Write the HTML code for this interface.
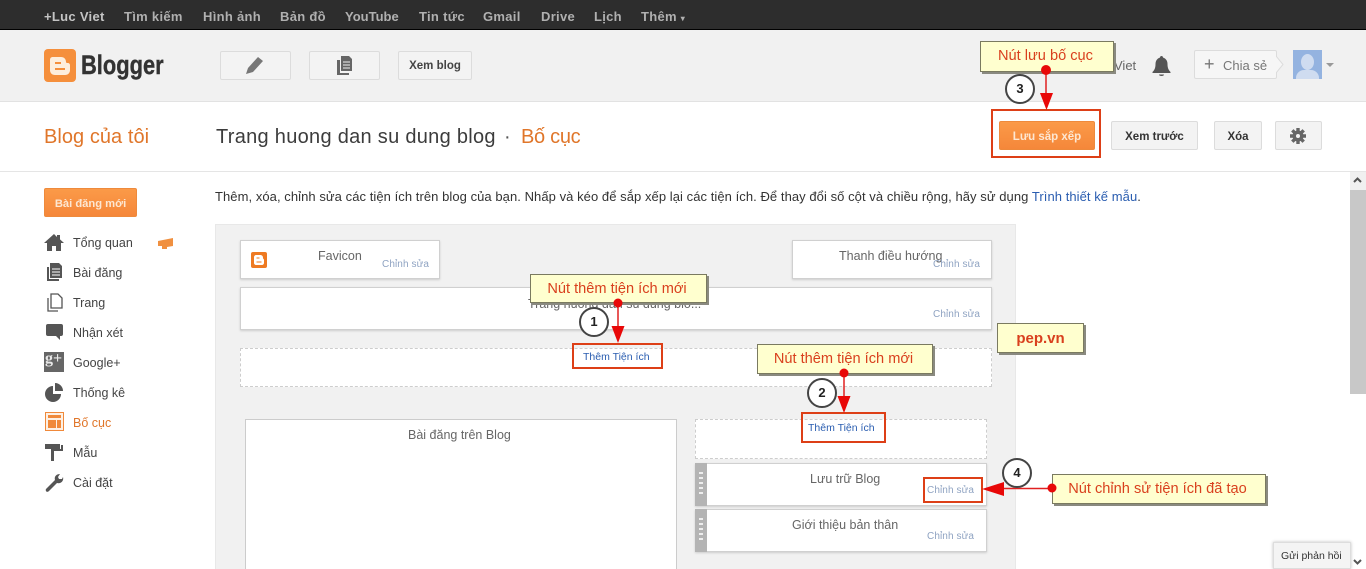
<!DOCTYPE html>
<html><head><meta charset="utf-8"><style>
html,body{margin:0;padding:0;width:1366px;height:569px;overflow:hidden;background:#fff;font-family:"Liberation Sans",sans-serif;color:#444}
body{position:relative}
div,a,span.a,svg{position:absolute}
.t{white-space:nowrap}
.nav{top:9px;font-size:13px;line-height:16px;font-weight:bold;color:#b0b0b0;white-space:nowrap;letter-spacing:.3px}
.btn{background:#f3f3f3;border:1px solid #dcdcdc;box-sizing:border-box;border-radius:2px}
.bt{font-size:11.500px;font-weight:bold;color:#333;text-align:center;white-space:nowrap}
.or{background:linear-gradient(#fb9a48,#f5873a);border:1px solid #ee8a3c;box-sizing:border-box;border-radius:2px;color:#fde7d2;font-size:11.500px;font-weight:bold;text-align:center;white-space:nowrap}
.m{left:73px;font-size:12.500px;line-height:16px;color:#444;white-space:nowrap}
.w{background:#fff;border:1px solid #d0d0d0;box-sizing:border-box;box-shadow:0 1px 2px rgba(0,0,0,.15)}
.d{background:#fff;border:1px dashed #cdcdcd;box-sizing:border-box}
.wt{font-size:12.500px;line-height:16px;color:#666;text-align:center;white-space:nowrap}
.e{font-size:10px;line-height:12px;color:#8fa3c2;white-space:nowrap;letter-spacing:.1px}
.l{font-size:10.500px;line-height:12px;color:#2a5db0;white-space:nowrap}
.c{background:#ffffcf;border:1px solid #7a7a60;box-sizing:border-box;box-shadow:2px 2px 0 #8a8a80;color:#d9401e;font-size:14.600px;text-align:center;white-space:nowrap;padding-right:3px}
.r{border:2px solid #dd3f17;box-sizing:border-box}
.n{width:30px;height:30px;border:2px solid #444;border-radius:50%;background:#fff;box-sizing:border-box;font-size:13px;font-weight:bold;line-height:26px;text-align:center;color:#222}
</style></head><body>

<div style="left:0;top:0;width:1366px;height:30px;background:#2d2d2d;border-bottom:1px solid #000;box-sizing:border-box"></div>
<div class="nav" style="left:44px;color:#c4c4c4">+Luc Viet</div>
<div class="nav" style="left:124px">Tìm kiếm</div>
<div class="nav" style="left:203px">Hình ảnh</div>
<div class="nav" style="left:280px">Bản đồ</div>
<div class="nav" style="left:345px;letter-spacing:0">YouTube</div>
<div class="nav" style="left:419px">Tin tức</div>
<div class="nav" style="left:483px">Gmail</div>
<div class="nav" style="left:541px">Drive</div>
<div class="nav" style="left:594px">Lịch</div>
<div class="nav" style="left:641px">Thêm <span style="font-size:8px">▾</span></div>

<div style="left:0;top:30px;width:1366px;height:72px;background:#f1f1f1;border-bottom:1px solid #e2e2e2;box-sizing:border-box"></div>
<div style="left:44px;top:49px;width:32px;height:33px;background:#f58f3c;border-radius:4px"></div>
<svg style="left:44px;top:49px" width="32" height="33" viewBox="0 0 32 33"><path d="M6 11c0-2 1-3 3-3h8c3 0 5 2 5 5 0 1 1 1 2 1s2 1 2 2v5c0 3-2 5-5 5H11c-3 0-5-2-5-5z" fill="#fdeedd"/><path d="M11 14h6M11 20h10" stroke="#f58f3c" stroke-width="2"/></svg>
<div class="t" style="left:81px;top:49px;font-size:27px;line-height:33px;font-weight:bold;color:#333;transform:scaleX(.81);transform-origin:0 0;-webkit-text-stroke:.4px #333">Blogger</div>

<div class="btn" style="left:220px;top:51px;width:71px;height:29px"></div>
<svg style="left:245px;top:55px" width="22" height="21" viewBox="0 0 22 21"><path d="M1 19l2-6L13 2l5 4L8 17z" fill="#777"/></svg>
<div class="btn" style="left:309px;top:51px;width:71px;height:29px"></div>
<svg style="left:336px;top:55px" width="18" height="21" viewBox="0 0 18 21"><path d="M5 1h8l3 3v12H5z" fill="#666"/><path d="M1 5h3v13h9v2H1z" fill="#666"/><path d="M7 7h7M7 10h7M7 13h7" stroke="#f1f1f1" stroke-width="1"/></svg>
<div class="btn" style="left:398px;top:51px;width:74px;height:29px"></div>
<div class="bt" style="left:398px;top:58px;width:74px;line-height:16px;font-weight:bold;color:#444">Xem blog</div>

<div class="t" style="left:1114px;top:58px;font-size:13px;line-height:16px;color:#666">Viet</div>
<svg style="left:1151px;top:55px" width="21" height="22" viewBox="0 0 21 22"><path d="M10.500 1c-1 0-1.500.7-1.500 1.500C6 3.500 4.500 6 4.500 9c0 4-1 6-3 8v1h18v-1c-2-2-3-4-3-8 0-3-1.500-5.500-4.500-6.500C12 1.700 11.500 1 10.500 1z" fill="#555"/><path d="M8 19.500h5c0 1-1 1.500-2.500 1.500S8 20.500 8 19.500z" fill="#555"/></svg>
<div class="btn" style="left:1194px;top:50px;width:83px;height:29px;background:#f6f6f6"></div>
<svg style="left:1276px;top:56px" width="8" height="17" viewBox="0 0 8 17"><path d="M0 0l7 8.500L0 17z" fill="#f6f6f6"/><path d="M0 0l7 8.500L0 17" fill="none" stroke="#dcdcdc"/></svg>
<div class="t" style="left:1204px;top:55px;font-size:18px;line-height:18px;color:#777">+</div>
<div class="t" style="left:1223px;top:58px;font-size:13px;line-height:16px;color:#777">Chia sẻ</div>
<div style="left:1293px;top:50px;width:29px;height:29px;background:#94b3e0;overflow:hidden">
<div style="left:8px;top:4px;width:13px;height:16px;background:#cfdcf0;border-radius:50%"></div>
<div style="left:3px;top:20px;width:23px;height:14px;background:#cfdcf0;border-radius:8px 8px 0 0"></div></div>
<div style="left:1326px;top:63px;width:0;height:0;border:4px solid transparent;border-top:4px solid #999"></div>

<div class="t" style="left:44px;top:124px;font-size:20px;line-height:26px;color:#e0762a;letter-spacing:.05px">Blog của tôi</div>
<div class="t" style="left:216px;top:124px;font-size:20px;line-height:26px;color:#3c3c3c;letter-spacing:.29px">Trang huong dan su dung blog</div>
<div class="t" style="left:504px;top:124px;font-size:20px;line-height:26px;color:#555">·</div>
<div class="t" style="left:521px;top:124px;font-size:20px;line-height:26px;color:#e0762a;letter-spacing:-.3px">Bố cục</div>

<div class="or" style="left:999px;top:121px;width:96px;height:29px;line-height:30px">Lưu sắp xếp</div>
<div class="btn" style="left:1111px;top:121px;width:87px;height:29px"></div>
<div class="bt" style="left:1111px;top:130px;width:87px;line-height:14px">Xem trước</div>
<div class="btn" style="left:1214px;top:121px;width:48px;height:29px"></div>
<div class="bt" style="left:1214px;top:130px;width:48px;line-height:14px">Xóa</div>
<div class="btn" style="left:1275px;top:121px;width:47px;height:29px"></div>
<svg style="left:1289px;top:127px" width="18" height="18" viewBox="0 0 18 18"><path d="M9 1v16M1 9h16M3.300 3.300l11.400 11.400M14.700 3.300L3.300 14.700" stroke="#666" stroke-width="3.400"/><circle cx="9" cy="9" r="5.500" fill="#666"/><circle cx="9" cy="9" r="2" fill="#f3f3f3"/></svg>

<div style="left:0;top:171px;width:1366px;height:1px;background:#e5e5e5"></div>

<div class="or" style="left:44px;top:188px;width:93px;height:29px;line-height:30px;font-size:11.200px">Bài đăng mới</div>

<svg style="left:44px;top:233px" width="20" height="18" viewBox="0 0 20 18"><path d="M10 1L0 10h3v8h5v-5h4v5h5v-8h3l-4-3.600V2h-3v2z" fill="#555"/></svg>
<div class="m" style="top:235px">Tổng quan</div>
<svg style="left:157px;top:237px" width="17" height="12" viewBox="0 0 17 12"><path d="M1 4l15-3v8l-6 1v2H5V9H1z" fill="#f09040"/></svg>
<svg style="left:46px;top:262px" width="17" height="20" viewBox="0 0 17 20"><path d="M4 1h9l3 3v12H4z" fill="#555"/><path d="M1 5h2v12h10v2H1z" fill="#555"/><path d="M6 7h8M6 10h8M6 13h8" stroke="#fff"/></svg>
<div class="m" style="top:265px">Bài đăng</div>
<svg style="left:46px;top:293px" width="17" height="19" viewBox="0 0 17 19" fill="none" stroke="#555" stroke-width="1.300"><path d="M5 1h7l4 4v10H5z"/><path d="M2 5v13h10"/></svg>
<div class="m" style="top:295px">Trang</div>
<svg style="left:45px;top:323px" width="19" height="18" viewBox="0 0 19 18"><path d="M3 1h13a2 2 0 012 2v8a2 2 0 01-2 2h-1v4l-4-4H3a2 2 0 01-2-2V3a2 2 0 012-2z" fill="#555"/></svg>
<div class="m" style="top:325px">Nhận xét</div>
<div style="left:44px;top:352px;width:20px;height:20px;background:#666;overflow:hidden"><div class="t" style="left:1px;top:-3px;font-size:16px;line-height:20px;font-family:'Liberation Serif',serif;font-weight:bold;color:#e8e8e8">g+</div></div>
<div class="m" style="top:355px">Google+</div>
<svg style="left:45px;top:383px" width="19" height="19" viewBox="0 0 19 19"><path d="M8 3a8 8 0 108 8H8z" fill="#555"/><path d="M10 0a8 8 0 018 8h-8z" fill="#555"/></svg>
<div class="m" style="top:385px">Thống kê</div>
<div style="left:45px;top:412px;width:19px;height:19px;border:1.500px solid #f0893a;box-sizing:border-box;background:#fdf0e4"></div>
<div style="left:48px;top:415px;width:13px;height:3px;background:#f0893a"></div>
<div style="left:48px;top:420px;width:8px;height:8px;background:#f0893a"></div>
<div style="left:57px;top:420px;width:4px;height:8px;background:#f0893a"></div>
<div class="m" style="top:415px;color:#e0762a">Bố cục</div>
<svg style="left:45px;top:443px" width="19" height="19" viewBox="0 0 19 19"><path d="M0 1h15v5H0z" fill="#555"/><path d="M16 2h2v6H9v10H6V6h10z" fill="#555"/></svg>
<div class="m" style="top:445px">Mẫu</div>
<svg style="left:45px;top:473px" width="19" height="19" viewBox="0 0 19 19"><path d="M1 16L10 7c-1-3 1-6 5-6l-2 3 1 2 3 0 1-2c1 4-2 7-6 6l-8 8c-2 2-4 0-3-2z" fill="#555"/></svg>
<div class="m" style="top:475px">Cài đặt</div>

<div class="t" style="left:215px;top:189px;font-size:13px;line-height:16px;color:#333;letter-spacing:.06px">Thêm, xóa, chỉnh sửa các tiện ích trên blog của bạn. Nhấp và kéo để sắp xếp lại các tiện ích. Để thay đổi số cột và chiều rộng, hãy sử dụng <span style="color:#2a5db0">Trình thiết kế mẫu</span>.</div>

<div style="left:215px;top:224px;width:801px;height:345px;background:#f1f1f1;border:1px solid #e8e8e8;border-bottom:0;box-sizing:border-box"></div>

<div class="w" style="left:240px;top:240px;width:200px;height:39px"></div>
<div style="left:251px;top:252px;width:16px;height:16px;background:#ee7a22;border-radius:2px"></div>
<svg style="left:251px;top:252px" width="16" height="16" viewBox="0 0 16 16"><path d="M3 5c0-1 1-2 2-2h4c2 0 3 1 3 3 0 1 1 1 1 2v3c0 1-1 2-2 2H5c-1 0-2-1-2-2z" fill="#fff"/><path d="M5.500 6h3M5.500 10h5" stroke="#ee7a22"/></svg>
<div class="wt" style="left:318px;top:248px">Favicon</div>
<div class="e" style="left:382px;top:259px">Chỉnh sửa</div>

<div class="w" style="left:792px;top:240px;width:200px;height:39px"></div>
<div class="wt" style="left:839px;top:248px">Thanh điều hướng</div>
<div class="e" style="left:933px;top:259px">Chỉnh sửa</div>

<div class="w" style="left:240px;top:287px;width:752px;height:43px"></div>
<div class="wt" style="left:528px;top:296px">Trang huong dan su dung blo...</div>
<div class="e" style="left:933px;top:309px">Chỉnh sửa</div>

<div class="d" style="left:240px;top:348px;width:752px;height:39px"></div>

<div style="left:245px;top:419px;width:432px;height:150px;background:#fff;border:1px solid #ccc;border-bottom:0;box-sizing:border-box"></div>
<div class="wt" style="left:408px;top:427px">Bài đăng trên Blog</div>

<div class="d" style="left:695px;top:419px;width:292px;height:40px"></div>

<div class="w" style="left:695px;top:463px;width:292px;height:43px"></div>
<div style="left:695px;top:463px;width:12px;height:43px;background:#b4b4b4"></div>
<div style="left:699px;top:472px;width:4px;height:24px;background:repeating-linear-gradient(#eee 0 2px,transparent 2px 5px)"></div>
<div class="wt" style="left:810px;top:471px">Lưu trữ Blog</div>
<div class="e" style="left:927px;top:485px">Chỉnh sửa</div>

<div class="w" style="left:695px;top:509px;width:292px;height:43px"></div>
<div style="left:695px;top:509px;width:12px;height:43px;background:#b4b4b4"></div>
<div style="left:699px;top:518px;width:4px;height:24px;background:repeating-linear-gradient(#eee 0 2px,transparent 2px 5px)"></div>
<div class="wt" style="left:792px;top:517px">Giới thiệu bản thân</div>
<div class="e" style="left:927px;top:531px">Chỉnh sửa</div>

<div class="l" style="left:583px;top:351px">Thêm Tiện ích</div>
<div class="l" style="left:808px;top:422px">Thêm Tiện ích</div>

<!-- scrollbar -->
<div style="left:1350px;top:172px;width:16px;height:18px;background:#f0f0f0"></div>
<div style="left:1350px;top:190px;width:16px;height:204px;background:#c8c8c8"></div>
<svg style="left:1352px;top:176px" width="11" height="8" viewBox="0 0 11 8"><path d="M2 6l3.500-3.500L9 6" fill="none" stroke="#555" stroke-width="2"/></svg>
<svg style="left:1352px;top:558px" width="11" height="8" viewBox="0 0 11 8"><path d="M2 2l3.500 3.500L9 2" fill="none" stroke="#555" stroke-width="2"/></svg>

<div style="left:1273px;top:542px;width:78px;height:27px;background:#f4f4f4;border:1px solid #ddd;box-sizing:border-box;box-shadow:0 0 3px rgba(0,0,0,.25)"></div>
<div class="t" style="left:1281px;top:549px;font-size:10.500px;line-height:14px;color:#333">Gửi phản hồi</div>

<!-- annotations -->
<div class="r" style="left:991px;top:109px;width:110px;height:49px"></div>
<div class="r" style="left:572px;top:343px;width:91px;height:26px"></div>
<div class="r" style="left:801px;top:412px;width:85px;height:31px"></div>
<div class="r" style="left:923px;top:477px;width:60px;height:26px"></div>

<div class="c" style="left:980px;top:41px;width:134px;height:31px;line-height:28px">Nút lưu bố cục</div>
<div class="c" style="left:530px;top:274px;width:177px;height:29px;line-height:29px">Nút thêm tiện ích mới</div>
<div class="c" style="left:757px;top:344px;width:176px;height:30px;line-height:28px">Nút thêm tiện ích mới</div>
<div class="c" style="left:1052px;top:474px;width:214px;height:30px;line-height:28px">Nút chỉnh sử tiện ích đã tạo</div>
<div class="c" style="left:997px;top:323px;width:87px;height:30px;line-height:30px;font-weight:bold;font-size:15px;padding-right:0">pep.vn</div>

<svg style="left:0;top:0" width="1366" height="569" viewBox="0 0 1366 569">
<g stroke="#e02020" stroke-width="1.500" fill="none">
<path d="M1046 70V98"/><path d="M618 303V330"/><path d="M844 373V398"/><path d="M1052 488.500H1000"/>
</g>
<g fill="#e80808">
<circle cx="1046" cy="70" r="5"/><path d="M1040 93h13l-6.500 17z"/>
<circle cx="618" cy="303" r="4.500"/><path d="M611.500 326h13l-6.500 17z"/>
<circle cx="844" cy="373" r="4.500"/><path d="M837.500 396h13l-6.500 17z"/>
<circle cx="1052" cy="488" r="4.500"/><path d="M1004 482v14l-22-7z"/>
</g></svg>

<div class="n" style="left:1005px;top:74px">3</div>
<div class="n" style="left:579px;top:307px">1</div>
<div class="n" style="left:807px;top:378px">2</div>
<div class="n" style="left:1002px;top:458px">4</div>

</body></html>
